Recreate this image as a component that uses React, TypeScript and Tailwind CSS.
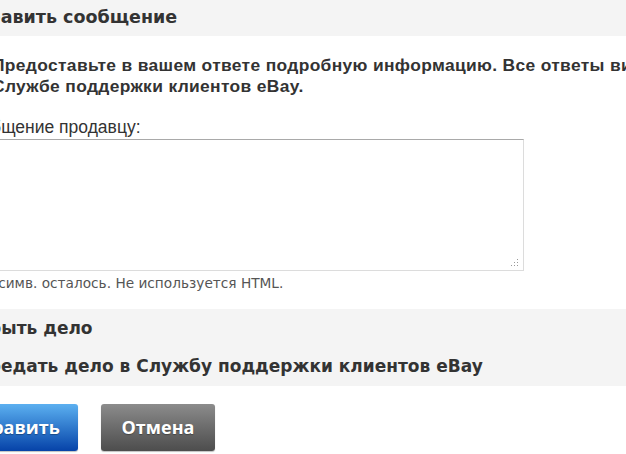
import React from "react";

export default function App() {
  const dots = [
    [6, 0],
    [3, 3],
    [6, 3],
    [0, 6],
    [3, 6],
    [6, 6],
  ];
  const heading = { fontFamily: '"DejaVu Sans", Verdana, sans-serif' };
  return (
    <div
      className="w-[626px] h-[454px] overflow-hidden bg-white text-[#333]"
      style={{ fontFamily: '"Liberation Sans", Arial, sans-serif' }}
    >
      <div className="-ml-[49px] w-[675px]">
        <div className="h-[36px] bg-[#f4f4f4] flex items-center">
          <h2 className="text-[17.5px] font-bold leading-none" style={heading}>
            Отправить сообщение
          </h2>
        </div>

        <p className="mt-[19px] pl-[41px] text-[17.4px] font-bold leading-[21px] tracking-[0.35px] whitespace-nowrap">
          Предоставьте в вашем ответе подробную информацию. Все ответы видны
          <br />
          Службе поддержки клиентов eBay.
        </p>

        <div className="pl-[8px]">
          <div className="mt-[21px] text-[17.5px] leading-[19px]">Сообщение продавцу:</div>

          <div className="relative mt-[2px] w-[565px] h-[132px] border border-[#dcdcdc] border-t-[#a9a9a9] bg-white">
            <textarea className="w-full h-full resize-none outline-none bg-transparent" />
            <div className="absolute right-[5px] bottom-[4px] w-[7px] h-[7px]">
              {dots.map(([x, y], i) => (
                <span
                  key={i}
                  className="absolute w-[1px] h-[1px] bg-[#999]"
                  style={{ left: x, top: y }}
                />
              ))}
            </div>
          </div>

          <div
            className="mt-[4px] text-[13.7px] leading-[16px] text-[#555]"
            style={{ fontFamily: '"DejaVu Sans", Verdana, sans-serif' }}
          >
            2000 симв. осталось. Не используется HTML.
          </div>
        </div>

        <div className="mt-[18px] h-[77px] bg-[#f4f4f4] flex flex-col text-[17px] font-bold" style={heading}>
          <div className="h-[39px] flex items-center pl-[3px]">Закрыть дело</div>
          <div className="h-[38px] flex items-center pl-[12px]">
            Передать дело в Службу поддержки клиентов eBay
          </div>
        </div>

        <div className="mt-[18px] -ml-[13px] flex gap-[23px]">
          <button
            className="h-[47px] w-[140px] rounded-[3px] bg-gradient-to-b from-[#5cb0f0] to-[#0742a8] text-white text-[18px] font-bold shadow-[0_1px_1px_rgba(0,0,0,0.25)]"
            style={{ fontFamily: '"Open Sans", sans-serif', textShadow: "0 1px 1px rgba(0,0,0,0.3)" }}
          >
            Отправить
          </button>
          <button
            className="h-[47px] w-[114px] rounded-[3px] bg-gradient-to-b from-[#8c8c8c] to-[#4d4d4d] text-white text-[18px] font-bold shadow-[0_1px_1px_rgba(0,0,0,0.25)]"
            style={{ fontFamily: '"Open Sans", sans-serif', textShadow: "0 1px 1px rgba(0,0,0,0.3)" }}
          >
            Отмена
          </button>
        </div>
      </div>
    </div>
  );
}
